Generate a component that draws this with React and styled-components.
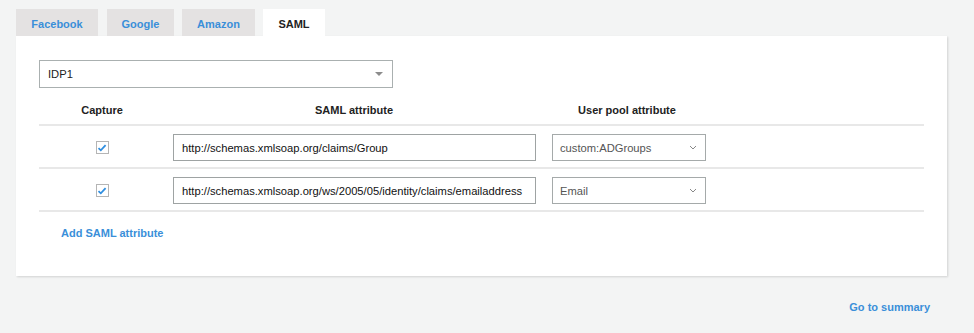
import React from "react";
import styled, { createGlobalStyle } from "styled-components";

const GlobalStyle = createGlobalStyle`
  html, body {
    margin: 0;
    padding: 0;
    background: #f3f4f4;
    font-family: "Liberation Sans", Arial, sans-serif;
  }
`;

const Page = styled.div`
  width: 974px;
  height: 333px;
  padding: 9px 27px 0 16px;
  box-sizing: border-box;
`;

const Tabs = styled.div`
  display: flex;
  gap: 8px;
`;

const Tab = styled.div`
  width: ${(p) => p.$w}px;
  margin-left: ${(p) => p.$ml || 0}px;
  height: 27px;
  padding-top: 2px;
  display: flex;
  align-items: center;
  justify-content: center;
  font-size: 11px;
  font-weight: bold;
  background: ${(p) => (p.$active ? "#ffffff" : "#e4e2e2")};
  color: ${(p) => (p.$active ? "#222222" : "#3a8fd9")};
  box-sizing: border-box;
`;

const Panel = styled.div`
  background: #fff;
  height: 240px;
  box-sizing: border-box;
  padding: 24px 23px 0 23px;
  box-shadow: 1px 1px 2px rgba(0, 0, 0, 0.14);
`;

const IdpSelect = styled.div`
  width: 354px;
  height: 28px;
  border: 1px solid #aab0b0;
  box-sizing: border-box;
  display: flex;
  align-items: center;
  justify-content: space-between;
  padding: 0 8px 0 8px;
  font-size: 11.2px;
  color: #222;
`;

const Caret = styled.span`
  width: 0;
  height: 0;
  border-left: 4px solid transparent;
  border-right: 4px solid transparent;
  border-top: 4px solid #8c8c8c;
  margin-right: 1px;
`;

const Table = styled.div`
  margin-top: 15px;
`;

const Row = styled.div`
  display: grid;
  grid-template-columns: 126px 378px 168px 1fr;
  align-items: center;
  height: ${(p) => (p.$head ? 23 : 43)}px;
  border-bottom: 2px solid #e8e8e8;
  box-sizing: border-box;
`;

const HeadCell = styled.div`
  font-size: 11px;
  font-weight: bold;
  color: #222;
  text-align: center;
  padding-bottom: 7px;
`;

const Cell = styled.div`
  display: flex;
  justify-content: ${(p) => (p.$center ? "center" : "flex-start")};
  padding-left: ${(p) => (p.$center ? 0 : 8)}px;
  padding-top: 2px;
`;

const Check = styled.span`
  width: 13px;
  height: 13px;
  border: 1px solid #b5b5b5;
  box-sizing: border-box;
  display: flex;
  align-items: center;
  justify-content: center;
  background: #fff;
`;

const TextInput = styled.div`
  width: 363px;
  height: 27px;
  border: 1px solid #9ea3a3;
  box-sizing: border-box;
  display: flex;
  align-items: center;
  padding-left: 8px;
  font-size: 11.2px;
  color: #111;
  white-space: nowrap;
  overflow: hidden;
`;

const AttrSelect = styled.div`
  width: 154px;
  height: 27px;
  margin-left: 1px;
  border: 1px solid #a5aaaa;
  box-sizing: border-box;
  display: flex;
  align-items: center;
  justify-content: space-between;
  padding: 0 8px 0 7px;
  font-size: 11.2px;
  color: #555;
`;

const Link = styled.div`
  font-size: 11px;
  font-weight: bold;
  color: #3a8fd9;
`;

const AddLink = styled(Link)`
  padding: 15px 0 0 22px;
`;

const Footer = styled.div`
  display: flex;
  justify-content: flex-end;
  padding: 25px 17px 0 0;
`;

const Chevron = () => (
  <svg width="8" height="5" viewBox="0 0 8 5">
    <path d="M1 1 L4 4 L7 1" fill="none" stroke="#888" strokeWidth="1" />
  </svg>
);

const CheckMark = () => (
  <svg width="10" height="8" viewBox="0 0 10 8">
    <path d="M1.5 4.2 L3.8 6.3 L8.6 1.2" fill="none" stroke="#2f8ee0" strokeWidth="1.8" />
  </svg>
);

const rows = [
  { saml: "http://schemas.xmlsoap.org/claims/Group", attr: "custom:ADGroups" },
  { saml: "http://schemas.xmlsoap.org/ws/2005/05/identity/claims/emailaddress", attr: "Email" },
];

export default function App() {
  return (
    <>
      <GlobalStyle />
      <Page>
        <Tabs>
          <Tab $w={82}>Facebook</Tab>
          <Tab $w={67} $ml={1}>Google</Tab>
          <Tab $w={73}>Amazon</Tab>
          <Tab $w={62} $active>SAML</Tab>
        </Tabs>
        <Panel>
          <IdpSelect>
            <span>IDP1</span>
            <Caret />
          </IdpSelect>
          <Table>
            <Row $head>
              <HeadCell>Capture</HeadCell>
              <HeadCell>SAML attribute</HeadCell>
              <HeadCell>User pool attribute</HeadCell>
              <div />
            </Row>
            {rows.map((r) => (
              <Row key={r.saml}>
                <Cell $center>
                  <Check>
                    <CheckMark />
                  </Check>
                </Cell>
                <Cell>
                  <TextInput>{r.saml}</TextInput>
                </Cell>
                <Cell>
                  <AttrSelect>
                    <span>{r.attr}</span>
                    <Chevron />
                  </AttrSelect>
                </Cell>
                <div />
              </Row>
            ))}
          </Table>
          <AddLink>Add SAML attribute</AddLink>
        </Panel>
        <Footer>
          <Link>Go to summary</Link>
        </Footer>
      </Page>
    </>
  );
}
